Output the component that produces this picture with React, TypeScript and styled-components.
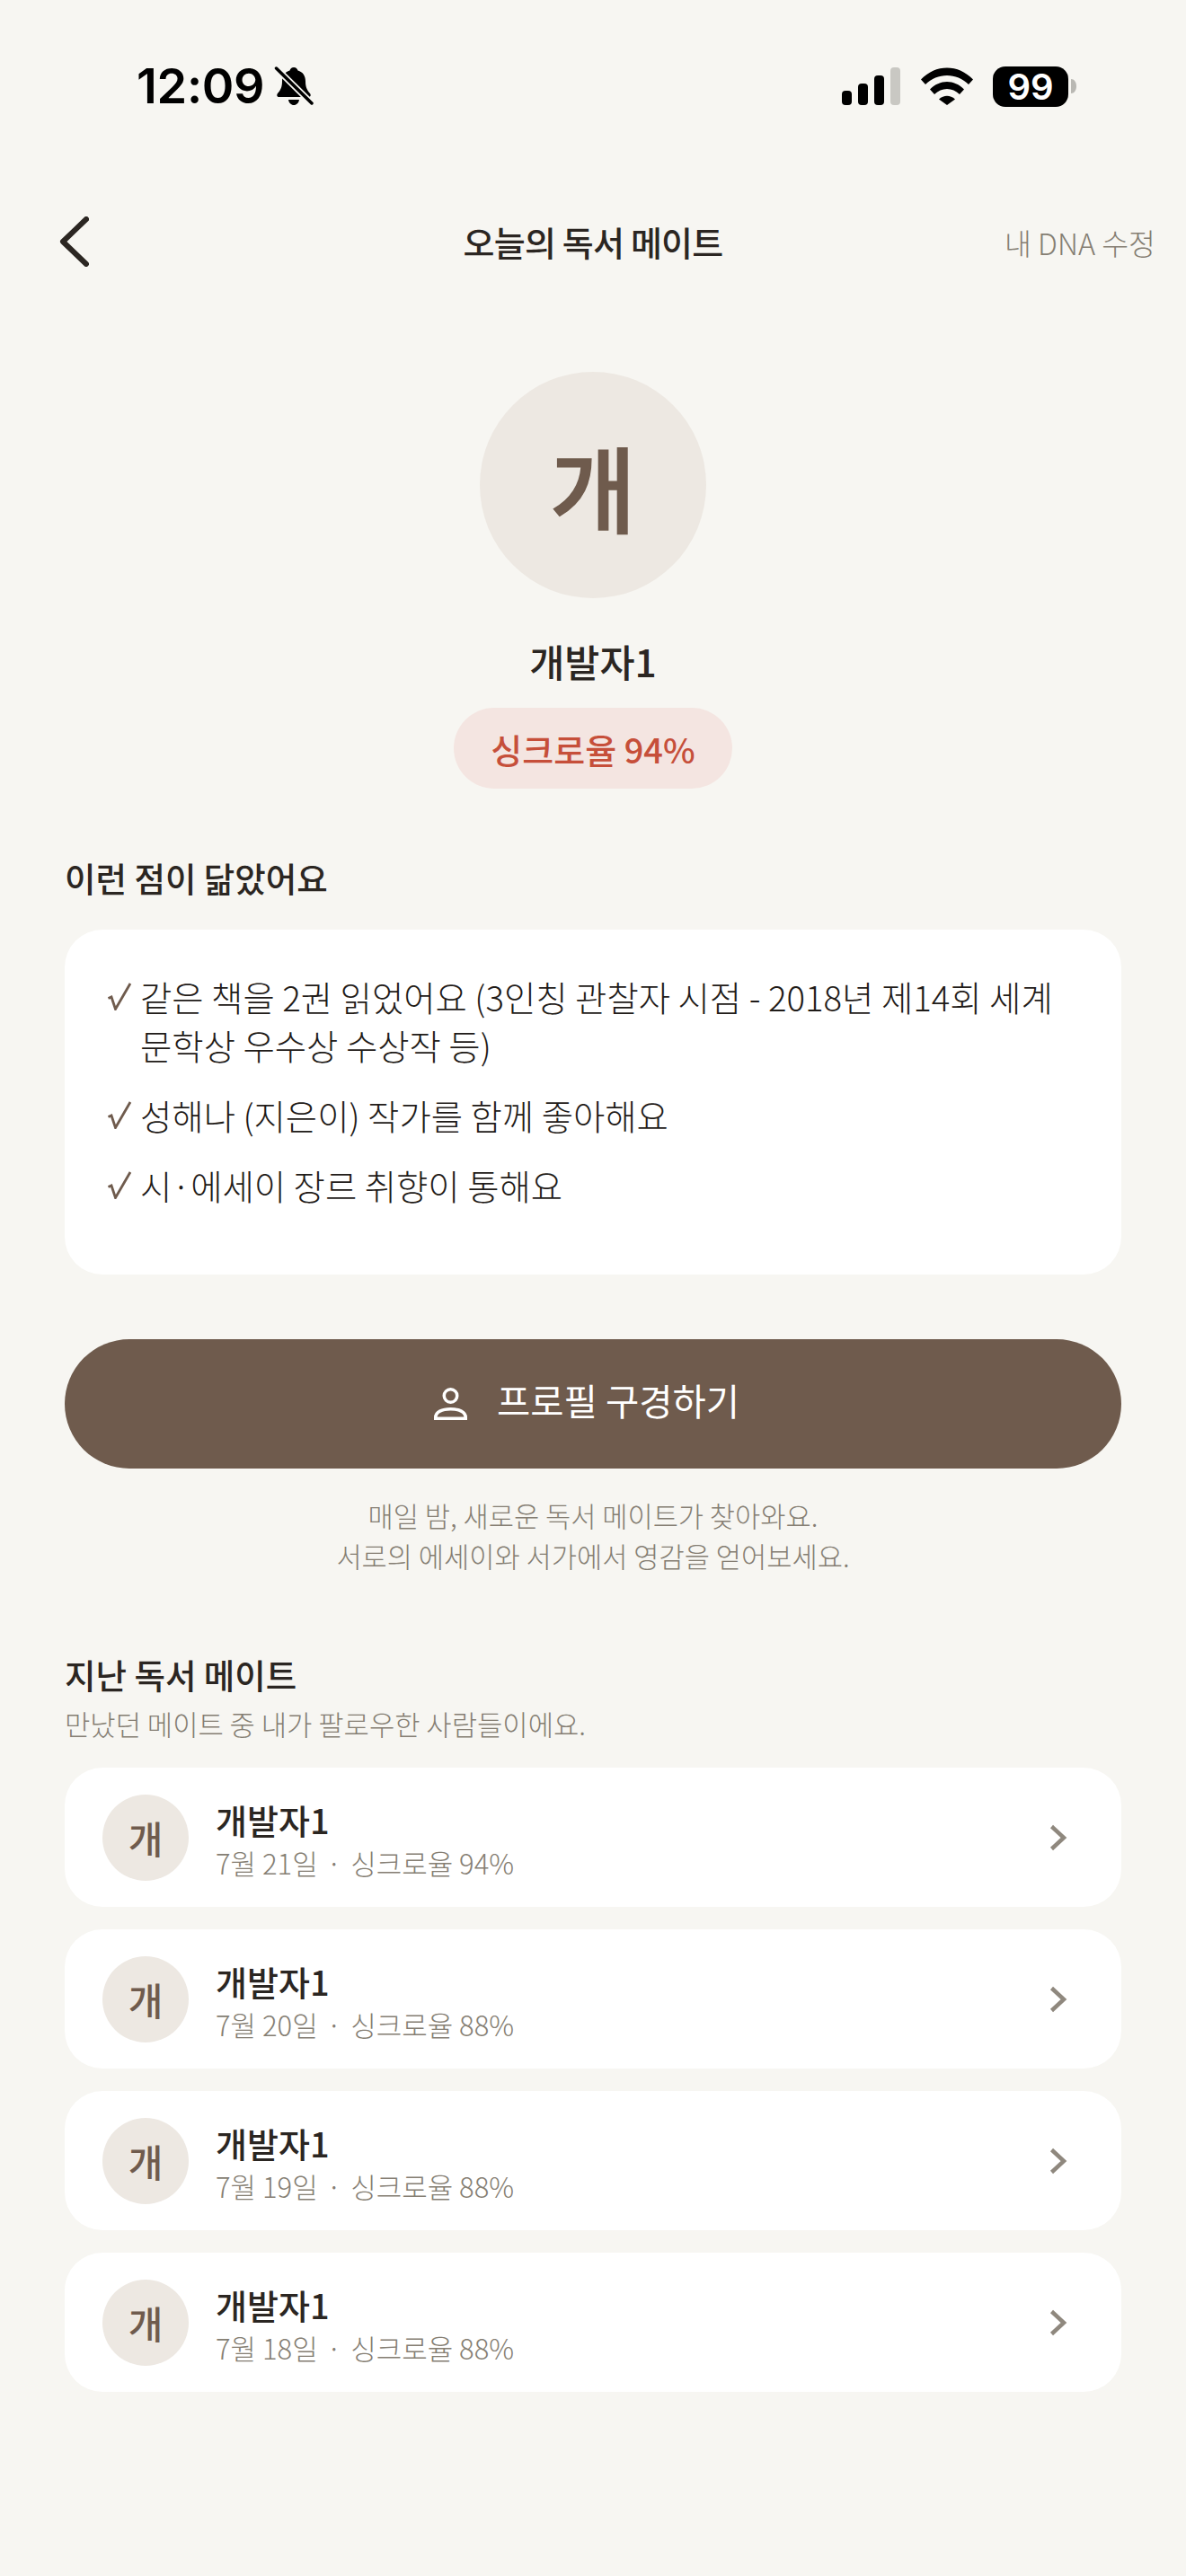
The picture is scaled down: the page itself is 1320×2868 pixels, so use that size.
import React from "react";
import styled, { createGlobalStyle } from "styled-components";

const Global = createGlobalStyle`
  html, body { margin: 0; padding: 0; background: #f7f6f2; }
  body { font-family: "Noto Sans CJK KR", "Noto Sans", sans-serif; color: #2b2622; }
  * { box-sizing: border-box; }
`;

const Page = styled.div`
  width: 1320px;
  height: 2868px;
  background: #f7f6f2;
  overflow: hidden;
  display: flex;
  flex-direction: column;
`;

const StatusBar = styled.div`
  height: 229px;
  display: flex;
  justify-content: space-between;
  align-items: flex-start;
  padding: 64px 122px 0 152px;
`;
const StatusLeft = styled.div`
  display: flex;
  align-items: center;
  gap: 11px;
`;
const Clock = styled.span`
  font-family: Inter, "Liberation Sans", sans-serif;
  font-size: 54px;
  line-height: 64px;
  font-weight: 600;
  color: #000;
  letter-spacing: -0.3px;
`;
const StatusRight = styled.div`
  display: flex;
  align-items: center;
  height: 64px;
  gap: 22px;
`;
const BatteryWrap = styled.div`
  display: flex;
  align-items: center;
  gap: 3px;
`;
const BatteryBody = styled.div`
  width: 84px;
  height: 45px;
  border-radius: 14px;
  background: #000;
  color: #fff;
  font-family: Inter, "Liberation Sans", sans-serif;
  font-size: 40px;
  font-weight: 600;
  line-height: 45px;
  text-align: center;
`;

const Header = styled.header`
  height: 80px;
  padding: 0 34px 0 65px;
  display: flex;
  align-items: center;
  justify-content: space-between;
  position: relative;
`;
const Title = styled.h1`
  position: absolute;
  left: 0;
  right: 0;
  margin: 0;
  padding-bottom: 2px;
  text-align: center;
  font-size: 38px;
  font-weight: 500;
  color: #2b2622;
  letter-spacing: -0.8px;
`;
const EditLink = styled.span`
  font-size: 32.5px;
  font-weight: 300;
  color: #857e73;
`;

const Hero = styled.section`
  display: flex;
  flex-direction: column;
  align-items: center;
  padding-top: 105px;
`;
const Avatar = styled.div<{ $size: number; $font: number }>`
  width: ${(p) => p.$size}px;
  height: ${(p) => p.$size}px;
  border-radius: 50%;
  background: #ede8e2;
  color: #6f5b4d;
  font-size: ${(p) => p.$font}px;
  font-weight: 500;
  display: flex;
  align-items: center;
  justify-content: center;
  flex-shrink: 0;
`;
const HeroAvatar = styled(Avatar)`
  -webkit-text-stroke: 1.5px #6f5b4d;
`;
const HeroName = styled.div`
  margin-top: 40px;
  font-size: 42.5px;
  line-height: 60px;
  font-weight: 500;
  color: #2b2622;
`;
const SyncPill = styled.div`
  margin-top: 22px;
  width: 310px;
  height: 90px;
  border-radius: 45px;
  background: #f4e5e1;
  color: #c64f3a;
  font-size: 38px;
  font-weight: 500;
  display: flex;
  align-items: center;
  justify-content: center;
`;

const Section = styled.section<{ $top: number }>`
  padding: 0 72px;
  margin-top: ${(p) => p.$top}px;
`;
const SectionTitle = styled.h2`
  margin: 0;
  font-size: 37.5px;
  line-height: 56px;
  font-weight: 500;
  color: #2b2622;
`;
const ReasonCard = styled.ul`
  list-style: none;
  margin: 30px 0 0;
  height: 384px;
  padding: 47px 60px 0 44px;
  background: #fff;
  border-radius: 42px;
  display: flex;
  flex-direction: column;
  gap: 24px;
`;
const ReasonItem = styled.li`
  display: flex;
  gap: 6px;
  font-size: 38.4px;
  line-height: 54px;
  font-weight: 300;
  color: #1f1b18;
`;
const CheckMark = styled.span`
  flex: 0 0 34px;
  display: flex;
  height: 54px;
  align-items: center;
  color: #6f5b4d;
`;

const ProfileButton = styled.button`
  width: 100%;
  height: 144px;
  margin-top: 72px;
  padding: 0 14px 0 0;
  border: none;
  border-radius: 72px;
  background: #6f5b4d;
  color: #fff;
  font-family: inherit;
  font-size: 40.5px;
  font-weight: 400;
  display: flex;
  align-items: center;
  justify-content: center;
  gap: 33px;
`;
const ButtonLabel = styled.span`
  padding-bottom: 10px;
`;
const Note = styled.p`
  margin: 29px 0 0;
  text-align: center;
  font-size: 30.7px;
  line-height: 45px;
  font-weight: 300;
  color: #857e73;
`;

const SubText = styled.p`
  margin: 5px 0 0;
  font-size: 30.8px;
  line-height: 44px;
  font-weight: 300;
  color: #857e73;
`;
const MateList = styled.div`
  margin-top: 27px;
  display: flex;
  flex-direction: column;
  gap: 25px;
`;
const MateRow = styled.div`
  height: 155px;
  padding: 0 60px 0 42px;
  background: #fff;
  border-radius: 42px;
  display: flex;
  align-items: center;
  gap: 30px;
`;
const MateText = styled.div`
  flex: 1;
  padding-top: 6px;
  display: flex;
  flex-direction: column;
  gap: 1px;
`;
const MateName = styled.div`
  font-size: 38px;
  line-height: 50px;
  font-weight: 500;
  color: #2b2622;
`;
const MateMeta = styled.div`
  font-size: 31px;
  line-height: 44px;
  font-weight: 300;
  color: #857e73;
`;
const MetaDot = styled.span`
  margin: 0 3px;
`;

const Bell = () => (
  <svg width="44" height="46" viewBox="0 0 44 46" aria-hidden>
    <path d="M22 2c2.400 0 4 1.600 4.500 3.500 5.500 1.500 8.500 6 8.500 12 0 7 2 10 5 13.500 1.500 2 .5 4-1.500 4H5.500c-2 0-3-2-1.500-4 3-3.500 5-6.500 5-13.500 0-6 3-10.500 8.500-12C18 3.600 19.600 2 22 2z" fill="#000" />
    <path d="M16 38h12c-.5 3.500-3 6-6 6s-5.500-2.500-6-6z" fill="#000" />
    <path d="M2 2.500l40 39.500" stroke="#f7f6f2" strokeWidth="7" />
    <path d="M2.500 3l39.500 39" stroke="#000" strokeWidth="3.500" strokeLinecap="round" />
  </svg>
);

const Signal = () => (
  <svg width="66" height="42" viewBox="0 0 66 42" aria-hidden>
    <rect x="0" y="26" width="11" height="16" rx="4" fill="#000" />
    <rect x="18" y="18" width="11" height="24" rx="4" fill="#000" />
    <rect x="36" y="9" width="11" height="33" rx="4" fill="#000" />
    <rect x="54" y="0" width="11" height="42" rx="4" fill="#c9c8c3" />
  </svg>
);

const Wifi = () => (
  <svg width="58" height="42" viewBox="0 0 58 42" aria-hidden>
    <path d="M0 13.500C16-4 42-4 58 13.500l-5 5.500C40 5.500 18 5.500 5 19z" fill="#000" />
    <path d="M10 24.500c11-11.500 27-11.500 38 0l-5 5.500c-8-8-20-8-28 0z" fill="#000" />
    <path d="M20 35.500c5.500-5 12.500-5 18 0l-9 6.500z" fill="#000" />
  </svg>
);

const BatteryCap = () => (
  <svg width="6" height="16" viewBox="0 0 6 16" aria-hidden>
    <path d="M0 0c3.500 0 6 3.500 6 8s-2.500 8-6 8z" fill="#b9b8b3" />
  </svg>
);

const BackChevron = () => (
  <svg width="34" height="56" viewBox="0 0 34 56" aria-hidden>
    <path d="M31 3L5 28l26 25" fill="none" stroke="#2b2622" strokeWidth="6" strokeLinecap="round" strokeLinejoin="round" />
  </svg>
);

const Check = () => (
  <svg width="34" height="32" viewBox="0 0 34 32" aria-hidden>
    <path d="M4.500 18.500l3.500-1.500 4.500 13.500L29 2" fill="none" stroke="#6f5b4d" strokeWidth="2.800" />
  </svg>
);

const PersonIcon = () => (
  <svg width="37" height="36" viewBox="0 0 37 36" aria-hidden>
    <circle cx="18.500" cy="9" r="7.250" fill="none" stroke="#fff" strokeWidth="3.500" />
    <path d="M1.750 34.250v-1C1.750 27 9 23.750 18.500 23.750s16.750 3.250 16.750 9.500v1z" fill="none" stroke="#fff" strokeWidth="3.500" strokeLinejoin="miter" />
  </svg>
);

const RowChevron = () => (
  <svg width="20" height="30" viewBox="0 0 20 30" aria-hidden>
    <path d="M2.500 2.500L16 15 2.500 27.500" fill="none" stroke="#8f887e" strokeWidth="4.500" />
  </svg>
);

const mates = [
  { date: "7월 21일", rate: 94 },
  { date: "7월 20일", rate: 88 },
  { date: "7월 19일", rate: 88 },
  { date: "7월 18일", rate: 88 },
];

export default function App() {
  return (
    <Page>
      <Global />
      <StatusBar>
        <StatusLeft>
          <Clock>12:09</Clock>
          <Bell />
        </StatusLeft>
        <StatusRight>
          <Signal />
          <Wifi />
          <BatteryWrap>
            <BatteryBody>99</BatteryBody>
            <BatteryCap />
          </BatteryWrap>
        </StatusRight>
      </StatusBar>

      <Header>
        <BackChevron />
        <Title>오늘의 독서 메이트</Title>
        <EditLink>내 DNA 수정</EditLink>
      </Header>

      <Hero>
        <HeroAvatar $size={252} $font={104}>개</HeroAvatar>
        <HeroName>개발자1</HeroName>
        <SyncPill>싱크로율 94%</SyncPill>
      </Hero>

      <Section $top={71}>
        <SectionTitle>이런 점이 닮았어요</SectionTitle>
        <ReasonCard>
          <ReasonItem>
            <CheckMark><Check /></CheckMark>
            <span>같은 책을 2권 읽었어요 (3인칭 관찰자 시점 - 2018년 제14회 세계 문학상 우수상 수상작 등)</span>
          </ReasonItem>
          <ReasonItem>
            <CheckMark><Check /></CheckMark>
            <span>성해나 (지은이) 작가를 함께 좋아해요</span>
          </ReasonItem>
          <ReasonItem>
            <CheckMark><Check /></CheckMark>
            <span>시·에세이 장르 취향이 통해요</span>
          </ReasonItem>
        </ReasonCard>
        <ProfileButton>
          <PersonIcon />
          <ButtonLabel>프로필 구경하기</ButtonLabel>
        </ProfileButton>
        <Note>
          매일 밤, 새로운 독서 메이트가 찾아와요.
          <br />
          서로의 에세이와 서가에서 영감을 얻어보세요.
        </Note>
      </Section>

      <Section $top={82}>
        <SectionTitle>지난 독서 메이트</SectionTitle>
        <SubText>만났던 메이트 중 내가 팔로우한 사람들이에요.</SubText>
        <MateList>
          {mates.map((m) => (
            <MateRow key={m.date}>
              <Avatar $size={96} $font={42}>개</Avatar>
              <MateText>
                <MateName>개발자1</MateName>
                <MateMeta>{m.date}<MetaDot> · </MetaDot>싱크로율 {m.rate}%</MateMeta>
              </MateText>
              <RowChevron />
            </MateRow>
          ))}
        </MateList>
      </Section>
    </Page>
  );
}
